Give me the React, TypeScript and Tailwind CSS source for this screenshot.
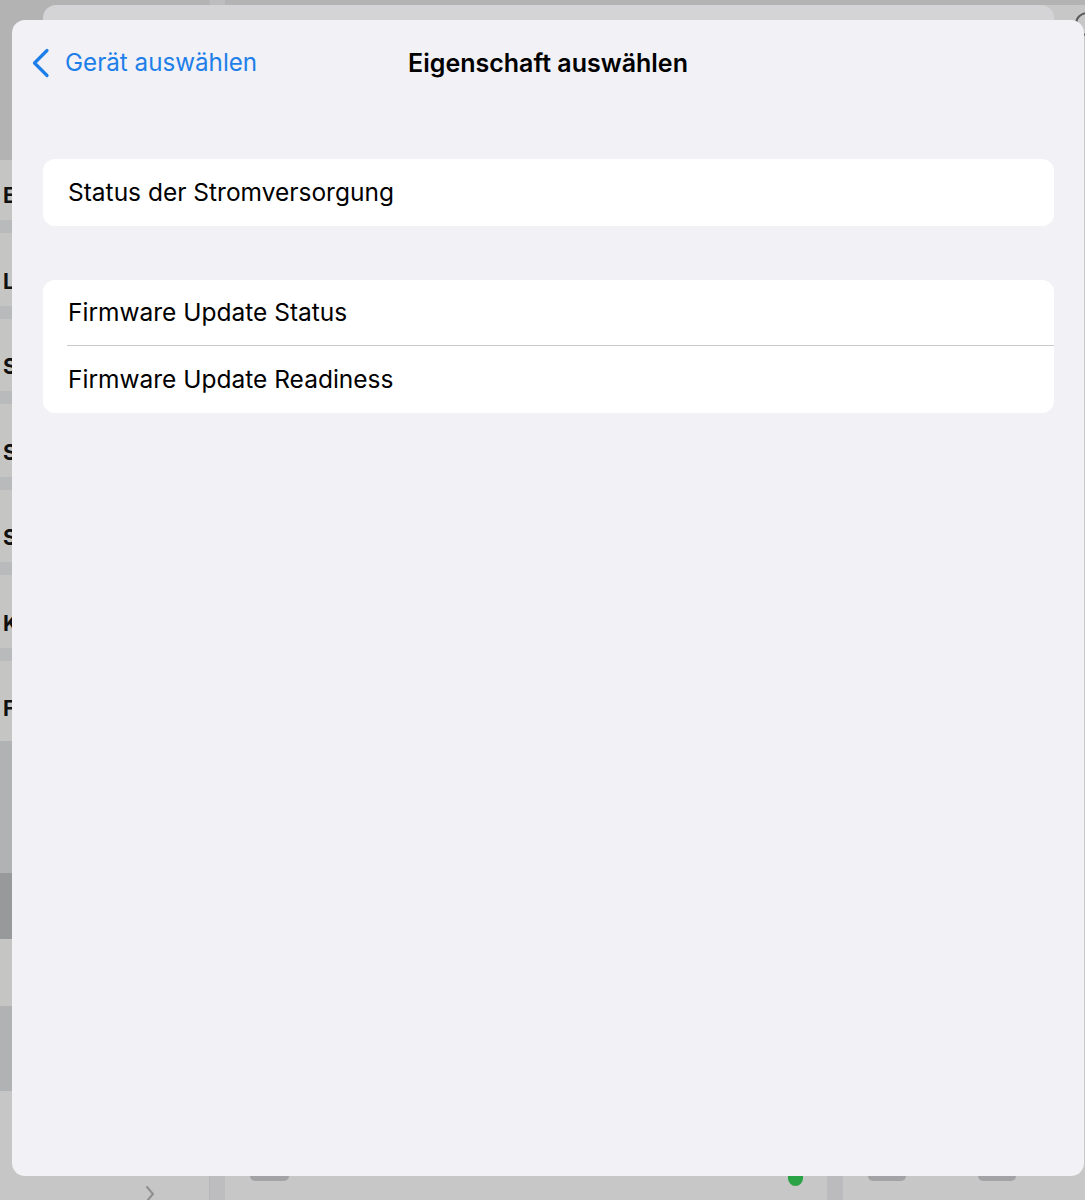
import React from 'react';

const sidebarRows = [
  { h: 'h-[160px]', bg: 'bg-[#b3b3b4]', label: '', pt: '' },
  { h: 'h-[60px]', bg: 'bg-[#c5c6c3]', label: 'E', pt: 'pt-[12px]' },
  { h: 'h-[13px]', bg: 'bg-[#b9babc]', label: '', pt: '' },
  { h: 'h-[72.5px]', bg: 'bg-[#c5c6c3]', label: 'L', pt: 'pt-[24px]' },
  { h: 'h-[13px]', bg: 'bg-[#b9babc]', label: '', pt: '' },
  { h: 'h-[72.5px]', bg: 'bg-[#c5c6c3]', label: 'S', pt: 'pt-[24px]' },
  { h: 'h-[13px]', bg: 'bg-[#b9babc]', label: '', pt: '' },
  { h: 'h-[72.5px]', bg: 'bg-[#c5c6c3]', label: 'S', pt: 'pt-[24px]' },
  { h: 'h-[13px]', bg: 'bg-[#b9babc]', label: '', pt: '' },
  { h: 'h-[72.5px]', bg: 'bg-[#c5c6c3]', label: 'S', pt: 'pt-[24px]' },
  { h: 'h-[13px]', bg: 'bg-[#b9babc]', label: '', pt: '' },
  { h: 'h-[72.5px]', bg: 'bg-[#c5c6c3]', label: 'K', pt: 'pt-[24px]' },
  { h: 'h-[13px]', bg: 'bg-[#b9babc]', label: '', pt: '' },
  { h: 'h-[80px]', bg: 'bg-[#c5c6c3]', label: 'F', pt: 'pt-[16px]' },
  { h: 'h-[132px]', bg: 'bg-[#b1b2b4]', label: '', pt: '' },
  { h: 'h-[66px]', bg: 'bg-[#98999b]', label: '', pt: '' },
  { h: 'h-[67px]', bg: 'bg-[#c5c6c4]', label: '', pt: '' },
  { h: 'h-[85px]', bg: 'bg-[#b1b2b4]', label: '', pt: '' },
];

const Row: React.FC<{ label: string; divider?: boolean }> = ({ label, divider }) => (
  <div className="relative h-[66.5px] flex items-center pl-[25px]">
    <span className="text-[24.5px] text-black">{label}</span>
    {divider && <div className="absolute bottom-0 left-[24px] right-0 h-px bg-[#c8c8cc]"></div>}
  </div>
);

const App: React.FC = () => {
  return (
    <div
      className="relative w-[1085px] h-[1200px] overflow-hidden bg-[#c7c7c7]"
      style={{ fontFamily: 'Inter, "Noto Sans", sans-serif' }}
    >
      {/* Underlying app (dimmed) */}
      <div className="flex h-full">
        <div className="w-[210px] flex flex-col border-r border-[#b6b6b8]">
          {sidebarRows.map((r, i) => (
            <div key={i} className={`${r.h} ${r.bg} ${r.pt} flex items-center pl-[3px] overflow-hidden shrink-0`}>
              {r.label && <span className="text-[21px] font-bold text-[#111]">{r.label}</span>}
            </div>
          ))}
          <div className="flex-1 flex items-end pl-[144px] bg-[#c6c6c6]">
            <svg width="12" height="20" viewBox="0 0 12 20" className="mb-[-4px]">
              <path d="M3 3 L9 10 L3 17" fill="none" stroke="#8e8e90" strokeWidth="2" strokeLinecap="round" />
            </svg>
          </div>
        </div>
        <div className="w-[15px] bg-[#bdbdc0]"></div>
        <div className="flex-1 flex flex-col bg-[#b3b3b3]">
          <div className="h-[5px]"></div>
          <div className="flex-1 bg-[#c7c7c7] flex items-end">
            <div className="flex items-start w-full h-[24px]">
              <div className="ml-[25px] w-[39px] h-[5px] rounded-b-[6px] bg-[#a3a3a5]"></div>
              <div className="ml-[499px] w-[15px] h-[10px] rounded-b-full bg-[#2aa346]"></div>
              <div className="ml-[24px] w-[16px] h-[24px] bg-[#bbbbbe]"></div>
              <div className="ml-[25px] w-[38px] h-[5px] rounded-b-[6px] bg-[#a3a3a5]"></div>
              <div className="ml-[72px] w-[38px] h-[5px] rounded-b-[6px] bg-[#a3a3a5]"></div>
            </div>
          </div>
        </div>
      </div>

      {/* Stacked sheet behind */}
      <div className="absolute left-[43px] top-[5px] w-[1011px] h-[60px] rounded-[13px] bg-[#d4d4d7]"></div>
      <div className="absolute right-[-14px] top-[12px] w-[24px] h-[24px] rounded-full border-2 border-[#5a5a5c]"></div>

      {/* Foreground sheet */}
      <div className="absolute left-[12px] top-[20px] w-[1072px] h-[1156px] rounded-[13px] bg-[#f1f1f6] flex flex-col">
        <div className="relative h-[86px] flex items-center">
          <div className="relative z-10 flex items-center pl-[19px] pt-[1px]">
            <svg width="20" height="30" viewBox="0 0 20 30" className="mr-[14px]">
              <path d="M16 2.5 L3.5 15 L16 27.5" fill="none" stroke="#1f7fe9" strokeWidth="3.2" strokeLinecap="round" strokeLinejoin="round" />
            </svg>
            <span className="text-[24.2px] text-[#1f7fe9]">Gerät auswählen</span>
          </div>
          <div className="absolute inset-0 flex items-center justify-center pt-[1px]">
            <span className="text-[25px] font-semibold text-black">Eigenschaft auswählen</span>
          </div>
        </div>

        <div className="flex flex-col gap-[54px] px-[31px] pt-[53px]">
          <div className="bg-white rounded-[12px] mr-[-1px]">
            <Row label="Status der Stromversorgung" />
          </div>
          <div className="bg-white rounded-[12px] mr-[-1px]">
            <Row label="Firmware Update Status" divider />
            <Row label="Firmware Update Readiness" />
          </div>
        </div>
      </div>
    </div>
  );
};

export default App;
